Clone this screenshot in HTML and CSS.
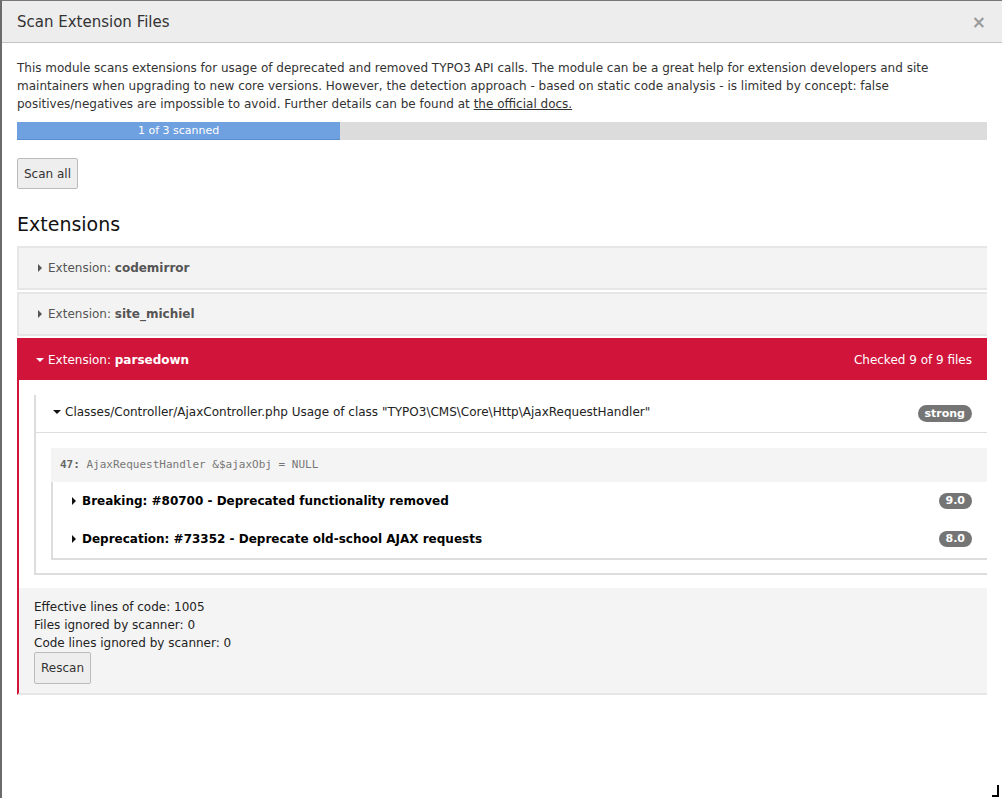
FILE: index.html
```html
<!DOCTYPE html>
<html>
<head>
<meta charset="utf-8">
<title>Scan Extension Files</title>
<link rel="stylesheet" href="styles.css">
</head>
<body>
<div class="modal">
  <div class="modal-header">
    <h4 class="modal-title">Scan Extension Files</h4>
    <span class="close">×</span>
  </div>
  <div class="modal-body">
    <p class="intro">This module scans extensions for usage of deprecated and removed TYPO3 API calls. The module can be a great help for extension developers and site maintainers when upgrading to new core versions. However, the detection approach - based on static code analysis - is limited by concept: false positives/negatives are impossible to avoid. Further details can be found at <a href="#">the official docs.</a></p>
    <div class="progress"><div class="progress-bar" style="width:33.33%">1 of 3 scanned</div></div>
    <button class="btn btn-scan">Scan all</button>
    <h2 class="section-title">Extensions</h2>
    <div class="panels">
      <div class="panel">
        <div class="panel-heading"><span class="caret-box"><span class="caret-right"></span></span>Extension:&nbsp;<b>codemirror</b></div>
      </div>
      <div class="panel">
        <div class="panel-heading"><span class="caret-box"><span class="caret-right"></span></span>Extension:&nbsp;<b>site_michiel</b></div>
      </div>
      <div class="panel panel-danger">
        <div class="panel-heading"><span class="caret-box"><span class="caret-down"></span></span>Extension:&nbsp;<b>parsedown</b><span class="panel-meta">Checked 9 of 9 files</span></div>
        <div class="panel-body">
          <div class="file-panel">
            <div class="file-heading"><span class="caret-box"><span class="caret-down dark"></span></span><span class="file-title">Classes/Controller/AjaxController.php Usage of class "TYPO3\CMS\Core\Http\AjaxRequestHandler"</span><span class="badge badge-top">strong</span></div>
            <div class="file-body">
              <div class="code"><b>47:</b> AjaxRequestHandler &amp;$ajaxObj = NULL</div>
              <div class="rest-list">
                <div class="rest-item"><span class="caret-box"><span class="caret-right dark"></span></span><span class="rest-title">Breaking: #80700 - Deprecated functionality removed</span><span class="badge">9.0</span></div>
                <div class="rest-item"><span class="caret-box"><span class="caret-right dark"></span></span><span class="rest-title">Deprecation: #73352 - Deprecate old-school AJAX requests</span><span class="badge">8.0</span></div>
              </div>
            </div>
          </div>
        </div>
        <div class="panel-footer">
          <div>Effective lines of code: 1005</div>
          <div>Files ignored by scanner: 0</div>
          <div>Code lines ignored by scanner: 0</div>
          <button class="btn btn-rescan">Rescan</button>
        </div>
      </div>
    </div>
  </div>
  <span class="resize-handle"></span>
</div>
</body>
</html>
```
FILE: styles.css
```css
html, body {
  margin: 0;
  padding: 0;
  background: #fff;
}
body {
  font-family: "DejaVu Sans", Verdana, sans-serif;
  font-size: 12px;
  color: #333;
}
.modal {
  position: relative;
  box-sizing: border-box;
  height: 798px;
  border-left: 2px solid #6b6b6b;
  border-top: 1px solid #777;
  overflow: hidden;
}
.modal-header {
  height: 42px;
  box-sizing: border-box;
  background: #ededed;
  border-bottom: 1px solid #c4c4c4;
  display: flex;
  align-items: center;
  justify-content: space-between;
  padding: 0 16px 0 15px;
}
.modal-title {
  margin: 0;
  font-size: 15px;
  font-weight: normal;
  color: #333;
  line-height: 20px;
}
.close {
  color: #9a9a9a;
  font-size: 17px;
  font-weight: bold;
  line-height: 20px;
}
.modal-body {
  padding: 16px 15px 15px;
}
.intro {
  margin: 0;
  line-height: 18px;
  color: #333;
}
.intro a {
  color: #333;
  text-decoration: underline;
}
.progress {
  margin-top: 9px;
  height: 18px;
  background: #dcdcdc;
  display: flex;
}
.progress-bar {
  background: #6fa0e0;
  border-bottom: 1px solid #5b8ccf;
  box-sizing: border-box;
  color: #fff;
  font-size: 11px;
  line-height: 17px;
  text-align: center;
}
.btn {
  font-family: "DejaVu Sans", Verdana, sans-serif;
  font-size: 12px;
  color: #333;
  background: #eee;
  border: 1px solid #bbb;
  border-radius: 2px;
  padding: 0 6px;
  cursor: pointer;
  display: block;
}
.btn-scan {
  margin-top: 18px;
  height: 31px;
}
.btn-rescan {
  margin-top: 0;
  height: 32px;
}
.section-title {
  margin: 23px 0 10px;
  font-size: 19px;
  font-weight: normal;
  line-height: 24px;
  color: #111;
}
.panels {
  display: flex;
  flex-direction: column;
  gap: 2px;
}
.panel {
  border: 2px solid #e6e6e6;
  border-right: 0;
  background: #f3f3f3;
}
.panel-heading {
  display: flex;
  align-items: center;
  height: 40px;
  box-sizing: border-box;
  padding: 0 15px 0 17px;
  color: #555;
  line-height: 18px;
}
.caret-box {
  width: 8px;
  display: inline-flex;
  justify-content: center;
  align-items: center;
  margin-right: 4px;
  flex: none;
}
.caret-right {
  width: 0;
  height: 0;
  border-left: 4px solid #555;
  border-top: 4px solid transparent;
  border-bottom: 4px solid transparent;
}
.caret-down {
  width: 0;
  height: 0;
  border-top: 4px solid #fff;
  border-left: 4px solid transparent;
  border-right: 4px solid transparent;
}
.caret-right.dark {
  border-left-color: #111;
}
.caret-down.dark {
  border-top-color: #111;
}
.panel-danger {
  border-top-color: #d1143a;
  border-left-color: #d1143a;
  background: #fff;
}
.panel-danger > .panel-heading {
  background: #d1143a;
  color: #fff;
}
.panel-meta {
  margin-left: auto;
}
.panel-body {
  padding: 15px 0 13px 15px;
  background: #fff;
}
.file-panel {
  border-left: 2px solid #ddd;
  border-bottom: 2px solid #ddd;
}
.file-heading {
  display: flex;
  align-items: flex-start;
  height: 38px;
  box-sizing: border-box;
  padding: 8px 15px 0 17px;
  border-bottom: 1px solid #ddd;
  color: #222;
  line-height: 18px;
}
.file-heading .caret-box {
  height: 18px;
}
.file-title {
  flex: 1;
}
.badge {
  background: #757575;
  color: #fff;
  font-weight: bold;
  font-size: 11px;
  line-height: 16px;
  border-radius: 9px;
  padding: 0 7px;
  flex: none;
}
.badge-top {
  margin-top: 2px;
  line-height: 17px;
}
.file-body {
  padding: 15px 0 13px 15px;
}
.code {
  background: #f4f4f4;
  font-family: "DejaVu Sans Mono", monospace;
  font-size: 11px;
  line-height: 18px;
  padding: 8px 9px;
  color: #777;
}
.code b {
  color: #666;
}
.rest-list {
  border-left: 2px solid #ddd;
  border-bottom: 2px solid #ddd;
}
.rest-item {
  display: flex;
  align-items: center;
  height: 38px;
  box-sizing: border-box;
  padding: 0 15px 0 17px;
  font-size: 12px;
  font-weight: bold;
  color: #000;
}
.rest-title {
  flex: 1;
}
.panel-footer {
  background: #f4f4f4;
  padding: 10px 15px 9px;
  line-height: 18px;
  color: #222;
}
.resize-handle {
  position: absolute;
  right: 3px;
  bottom: 1px;
  width: 5px;
  height: 10px;
  border-right: 2px solid #000;
  border-bottom: 2px solid #000;
}
```
